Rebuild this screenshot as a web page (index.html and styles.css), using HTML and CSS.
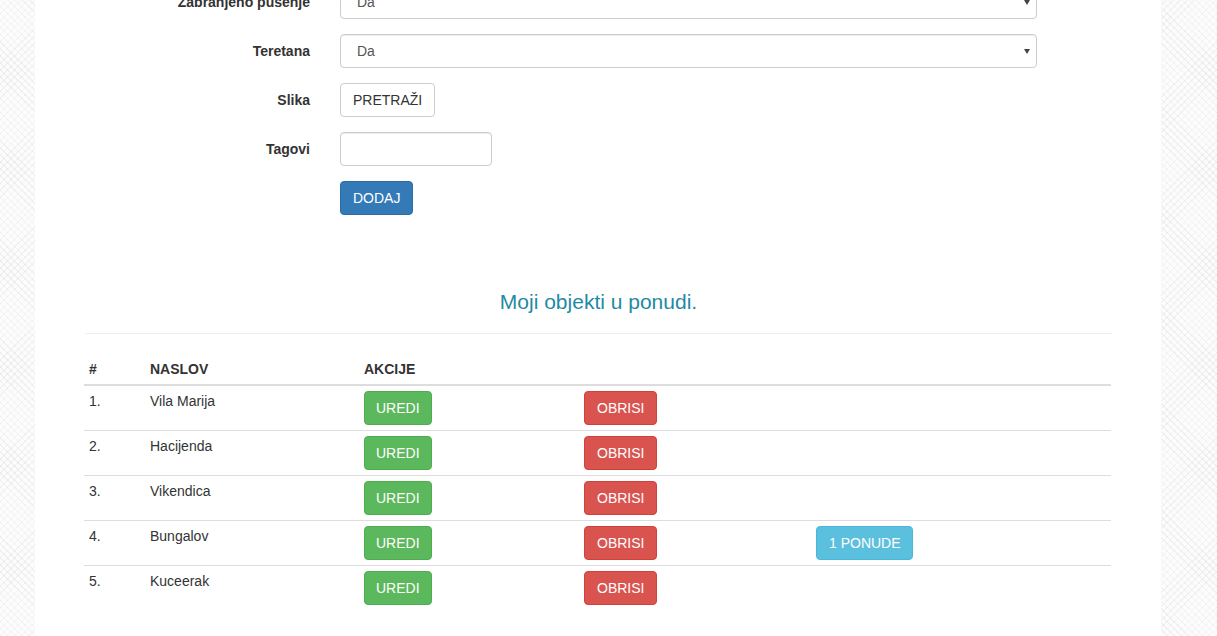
FILE: index.html
```html
<!DOCTYPE html>
<html lang="sr">
<head>
<meta charset="utf-8">
<title>Moji objekti</title>
<link rel="stylesheet" href="styles.css">
</head>
<body>
<div class="page">
  <div class="content">
    <form class="form">
      <div class="form-row">
        <label class="label">Zabranjeno pušenje</label>
        <div class="field"><div class="select-wrap"><select class="control"><option>Da</option></select></div></div>
      </div>
      <div class="form-row">
        <label class="label">Teretana</label>
        <div class="field"><div class="select-wrap"><select class="control"><option>Da</option></select></div></div>
      </div>
      <div class="form-row">
        <label class="label">Slika</label>
        <div class="field"><button type="button" class="btn btn-default">PRETRAŽI</button></div>
      </div>
      <div class="form-row">
        <label class="label">Tagovi</label>
        <div class="field"><input type="text" class="control tags"></div>
      </div>
      <div class="form-row">
        <span></span>
        <div class="field"><button type="button" class="btn btn-primary">DODAJ</button></div>
      </div>
    </form>

    <h4 class="title">Moji objekti u ponudi.</h4>
    <hr class="rule">

    <table class="table">
      <colgroup>
        <col class="c1"><col class="c2"><col class="c3"><col class="c4"><col class="c5">
      </colgroup>
      <thead>
        <tr><th>#</th><th>NASLOV</th><th>AKCIJE</th><th></th><th></th></tr>
      </thead>
      <tbody>
        <tr><td>1.</td><td>Vila Marija</td><td><button class="btn btn-success">UREDI</button></td><td><button class="btn btn-danger">OBRISI</button></td><td></td></tr>
        <tr><td>2.</td><td>Hacijenda</td><td><button class="btn btn-success">UREDI</button></td><td><button class="btn btn-danger">OBRISI</button></td><td></td></tr>
        <tr><td>3.</td><td>Vikendica</td><td><button class="btn btn-success">UREDI</button></td><td><button class="btn btn-danger">OBRISI</button></td><td></td></tr>
        <tr><td>4.</td><td>Bungalov</td><td><button class="btn btn-success">UREDI</button></td><td><button class="btn btn-danger">OBRISI</button></td><td><button class="btn btn-info">1 PONUDE</button></td></tr>
        <tr><td>5.</td><td>Kuceerak</td><td><button class="btn btn-success">UREDI</button></td><td><button class="btn btn-danger">OBRISI</button></td><td></td></tr>
      </tbody>
    </table>
  </div>
</div>
</body>
</html>
```

FILE: styles.css
```css
html, body {
  margin: 0;
  padding: 0;
  height: 100%;
  overflow: hidden;
}
body {
  font-family: "Liberation Sans", Arial, sans-serif;
  font-size: 14px;
  line-height: 20px;
  color: #333;
  background-color: #fcfcfc;
  background-image:
    repeating-linear-gradient(45deg, rgba(0,0,0,0.045) 0 1px, transparent 1px 5px),
    repeating-linear-gradient(-45deg, rgba(0,0,0,0.035) 0 1px, transparent 1px 5px);
}
.page {
  display: flow-root;
  width: 1126px;
  margin-left: 35px;
  height: 100%;
  background: #fff;
}
.content {
  padding: 0 49px 0 50px;
}
.form {
  margin-top: -15px;
}
.form-row {
  display: grid;
  grid-template-columns: 240px 727px;
  margin-bottom: 15px;
}
.label {
  text-align: right;
  font-weight: bold;
  padding: 7px 15px 0 0;
}
.field {
  padding: 0 15px;
}
.control {
  box-sizing: border-box;
  height: 34px;
  border: 1px solid #ccc;
  border-radius: 4px;
  box-shadow: inset 0 1px 1px rgba(0,0,0,0.075);
  background: #fff;
  font-family: inherit;
  font-size: 14px;
  color: #555;
  padding: 6px 12px;
  outline: none;
}
.select-wrap {
  position: relative;
}
.select-wrap select {
  width: 100%;
  -webkit-appearance: none;
  appearance: none;
  padding-left: 16px;
}
.select-wrap::after {
  content: "";
  position: absolute;
  right: 7px;
  top: 15px;
  border-left: 3.5px solid transparent;
  border-right: 3.5px solid transparent;
  border-top: 5px solid #444;
}
.tags {
  width: 152px;
}
.btn {
  display: inline-block;
  box-sizing: border-box;
  height: 34px;
  padding: 6px 12px;
  border: 1px solid transparent;
  border-radius: 4px;
  font-family: inherit;
  font-size: 14px;
  line-height: 20px;
  cursor: pointer;
  vertical-align: top;
}
.btn-default { background: #fff; border-color: #ccc; color: #333; }
.btn-primary { background: #337ab7; border-color: #2e6da4; color: #fff; }
.btn-success { background: #5cb85c; border-color: #4cae4c; color: #fff; padding: 6px 11px; }
.btn-danger  { background: #d9534f; border-color: #d43f3a; color: #fff; }
.btn-info    { background: #5bc0de; border-color: #46b8da; color: #fff; padding: 6px 11px 6px 12px; }

.title {
  margin: 76px 0 0;
  text-align: center;
  font-weight: normal;
  font-size: 21px;
  line-height: 22px;
  color: #1f8aa3;
}
.rule {
  margin: 20px 0 20px;
  border: 0;
  border-top: 1px solid #eee;
}
.table {
  width: 1027px;
  border-collapse: collapse;
  table-layout: fixed;
  margin-left: -1px;
}
.c1 { width: 61px; }
.c2 { width: 213px; }
.c3 { width: 221px; }
.c4 { width: 232px; }
.c5 { width: 300px; }
.table th {
  text-align: left;
  font-weight: bold;
  padding: 5px;
  vertical-align: bottom;
  border-bottom: 2px solid #ddd;
}
.table td {
  padding: 5px;
  vertical-align: top;
  border-top: 1px solid #ddd;
}
.table tbody tr:first-child td {
  border-top: 0;
}
.table th:nth-child(3), .table td:nth-child(3) {
  padding-left: 6px;
}
```
